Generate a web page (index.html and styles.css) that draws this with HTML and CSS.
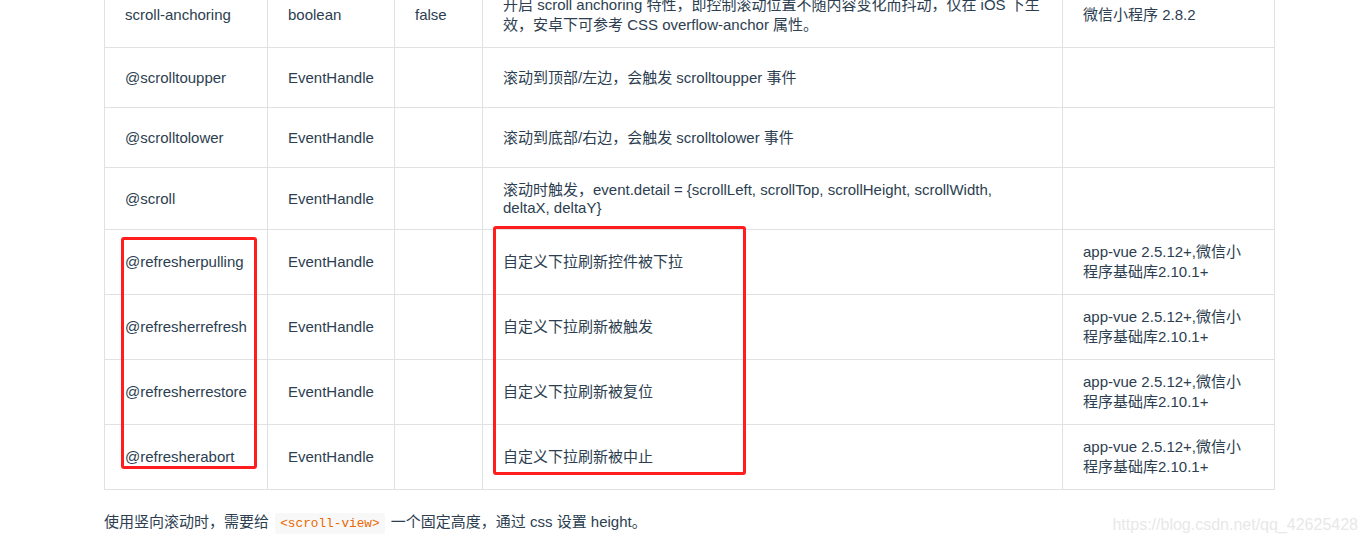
FILE: index.html
```html
<!DOCTYPE html>
<html lang="zh-CN">
<head>
    <meta charset="UTF-8">
    <meta name="viewport" content="width=device-width, initial-scale=1.0">
    <title>scroll-view 属性说明</title>
    <link rel="stylesheet" href="styles.css">
</head>
<body>
    <div class="page">
        <div class="content">
            <table class="props">
                <colgroup>
                    <col class="c-name">
                    <col class="c-type">
                    <col class="c-default">
                    <col class="c-desc">
                    <col class="c-platform">
                </colgroup>
                <tbody>
                    <tr class="row-tall">
                        <td>scroll-anchoring</td>
                        <td>boolean</td>
                        <td>false</td>
                        <td>开启 scroll anchoring 特性，即控制滚动位置不随内容变化而抖动，仅在 iOS 下生效，安卓下可参考 CSS overflow-anchor 属性。</td>
                        <td>微信小程序 2.8.2</td>
                    </tr>
                    <tr>
                        <td>@scrolltoupper</td>
                        <td>EventHandle</td>
                        <td></td>
                        <td>滚动到顶部/左边，会触发 scrolltoupper 事件</td>
                        <td></td>
                    </tr>
                    <tr>
                        <td>@scrolltolower</td>
                        <td>EventHandle</td>
                        <td></td>
                        <td>滚动到底部/右边，会触发 scrolltolower 事件</td>
                        <td></td>
                    </tr>
                    <tr class="row-scroll">
                        <td>@scroll</td>
                        <td>EventHandle</td>
                        <td></td>
                        <td class="tight">滚动时触发，event.detail = {scrollLeft, scrollTop, scrollHeight, scrollWidth, deltaX, deltaY}</td>
                        <td></td>
                    </tr>
                    <tr>
                        <td>@refresherpulling</td>
                        <td>EventHandle</td>
                        <td></td>
                        <td>自定义下拉刷新控件被下拉</td>
                        <td>app-vue 2.5.12+,微信小程序基础库2.10.1+</td>
                    </tr>
                    <tr>
                        <td>@refresherrefresh</td>
                        <td>EventHandle</td>
                        <td></td>
                        <td>自定义下拉刷新被触发</td>
                        <td>app-vue 2.5.12+,微信小程序基础库2.10.1+</td>
                    </tr>
                    <tr>
                        <td>@refresherrestore</td>
                        <td>EventHandle</td>
                        <td></td>
                        <td>自定义下拉刷新被复位</td>
                        <td>app-vue 2.5.12+,微信小程序基础库2.10.1+</td>
                    </tr>
                    <tr>
                        <td>@refresherabort</td>
                        <td>EventHandle</td>
                        <td></td>
                        <td>自定义下拉刷新被中止</td>
                        <td>app-vue 2.5.12+,微信小程序基础库2.10.1+</td>
                    </tr>
                </tbody>
            </table>

            <p class="note">使用竖向滚动时，需要给 <code>&lt;scroll-view&gt;</code> 一个固定高度，通过 css 设置 height。</p>

            <!-- hand-drawn highlight boxes over the table -->
            <div class="mark mark-names"></div>
            <div class="mark mark-desc"></div>
        </div>

        <div class="watermark">https://blog.csdn.net/qq_42625428</div>
    </div>
</body>
</html>
```

FILE: styles.css
```css
body {
    margin: 0;
    font-family: "Liberation Sans", Arial, "Noto Sans CJK SC", sans-serif;
    font-size: 15px;
    line-height: 20px;
    color: #2c3e50;
    background: #fff;
}

.page {
    position: relative;
    height: 544px;
    overflow: hidden;
}

/* the page is scrolled a little: the first row is cut at the top */
.content {
    position: relative;
    width: 1170px;
    margin-left: 104px;
    margin-top: -18px;
}

.props {
    width: 1170px;
    border-collapse: collapse;
    table-layout: fixed;
}

.c-name { width: 163px; }
.c-type { width: 127px; }
.c-default { width: 88px; }
.c-desc { width: 580px; }
.c-platform { width: 212px; }

.props tr {
    height: 60px;
}

.props td {
    border: 1px solid #dfe2e5;
    padding: 12px 20px;
    vertical-align: middle;
    text-align: left;
}

.props .row-scroll {
    height: 62px;
}

.props td.tight {
    line-height: 18px;
}

.note {
    margin: 22px 0 0;
}

.note code {
    font-family: "Liberation Mono", "Courier New", monospace;
    font-size: 12.75px;
    color: #e96900;
    background: #f8f8f8;
    padding: 3px 5px;
    border-radius: 2px;
    margin: 0 2px;
}

.mark {
    position: absolute;
    border: 3px solid #ff1d1d;
    border-radius: 3px;
}

.mark-names {
    left: 17px;
    top: 255px;
    width: 130px;
    height: 226px;
}

.mark-desc {
    left: 389px;
    top: 244px;
    width: 247px;
    height: 243px;
}

.watermark {
    position: absolute;
    right: 9px;
    top: 516px;
    font-family: "Liberation Sans", Arial, sans-serif;
    font-size: 16px;
    line-height: 18px;
    color: #e8e8e8;
}
```
